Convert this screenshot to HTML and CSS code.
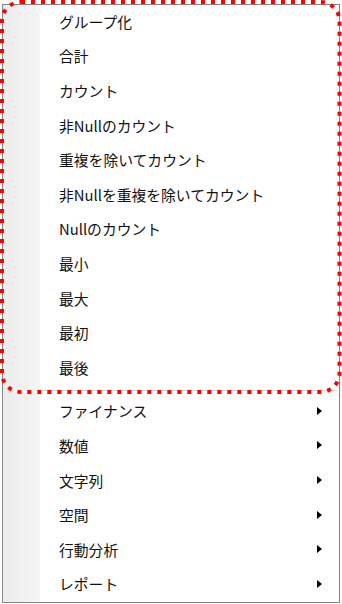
FILE: index.html
```html
<!DOCTYPE html>
<html lang="ja">
<head>
<meta charset="utf-8">
<link rel="stylesheet" href="styles.css">
</head>
<body>
<div class="menu">
  <div class="gutter"></div>
  <ul class="list">
    <li class="item">グループ化</li>
    <li class="item">合計</li>
    <li class="item">カウント</li>
    <li class="item">非Nullのカウント</li>
    <li class="item">重複を除いてカウント</li>
    <li class="item">非Nullを重複を除いてカウント</li>
    <li class="item">Nullのカウント</li>
    <li class="item">最小</li>
    <li class="item">最大</li>
    <li class="item">最初</li>
    <li class="item">最後</li>
    <li class="sep"></li>
    <li class="item sub">ファイナンス<span class="arrow"></span></li>
    <li class="item sub">数値<span class="arrow"></span></li>
    <li class="item sub">文字列<span class="arrow"></span></li>
    <li class="item sub">空間<span class="arrow"></span></li>
    <li class="item sub">行動分析<span class="arrow"></span></li>
    <li class="item sub">レポート<span class="arrow"></span></li>
  </ul>
</div>
<svg class="highlight" width="342" height="400" viewBox="0 0 342 400">
  <rect x="2" y="2" width="337.5" height="390" rx="19" ry="19" fill="none" stroke="#ff0000" stroke-width="4" stroke-dasharray="4 6"/>
</svg>
</body>
</html>
```
FILE: styles.css
```css
html, body {
  margin: 0;
  padding: 0;
  background: #ffffff;
}
body {
  width: 342px;
  height: 604px;
  position: relative;
  overflow: hidden;
  font-family: "Noto Sans CJK JP", "Noto Sans", sans-serif;
}
.menu {
  position: relative;
  margin: 4px 0 0 2px;
  width: 338px;
  height: 599px;
  box-sizing: border-box;
  border: 1px solid #858585;
  background: #ffffff;
  display: flex;
}
.gutter {
  width: 37px;
  flex: none;
  background: linear-gradient(to right, #ececec, #f5f5f5);
  border-right: 1px solid #ffffff;
}
.list {
  list-style: none;
  margin: 0;
  padding: 0;
  flex: 1;
  display: flex;
  flex-direction: column;
}
.item {
  height: 34.6px;
  box-sizing: border-box;
  display: flex;
  align-items: center;
  padding-left: 18px;
  padding-right: 17px;
  padding-bottom: 2px;
  font-size: 14.8px;
  color: #111111;
  white-space: nowrap;
}
.sub {
  justify-content: space-between;
}
.arrow {
  width: 0;
  height: 0;
  border-left: 5px solid #000000;
  border-top: 4.5px solid transparent;
  border-bottom: 4.5px solid transparent;
}
.sep {
  height: 9px;
  display: flex;
  align-items: center;
  padding-left: 2px;
  padding-right: 2px;
}
.sep::before {
  content: "";
  flex: 1;
  height: 1px;
  background: #d5d5d5;
}
.highlight {
  position: absolute;
  left: 0;
  top: 0;
  pointer-events: none;
}
```
